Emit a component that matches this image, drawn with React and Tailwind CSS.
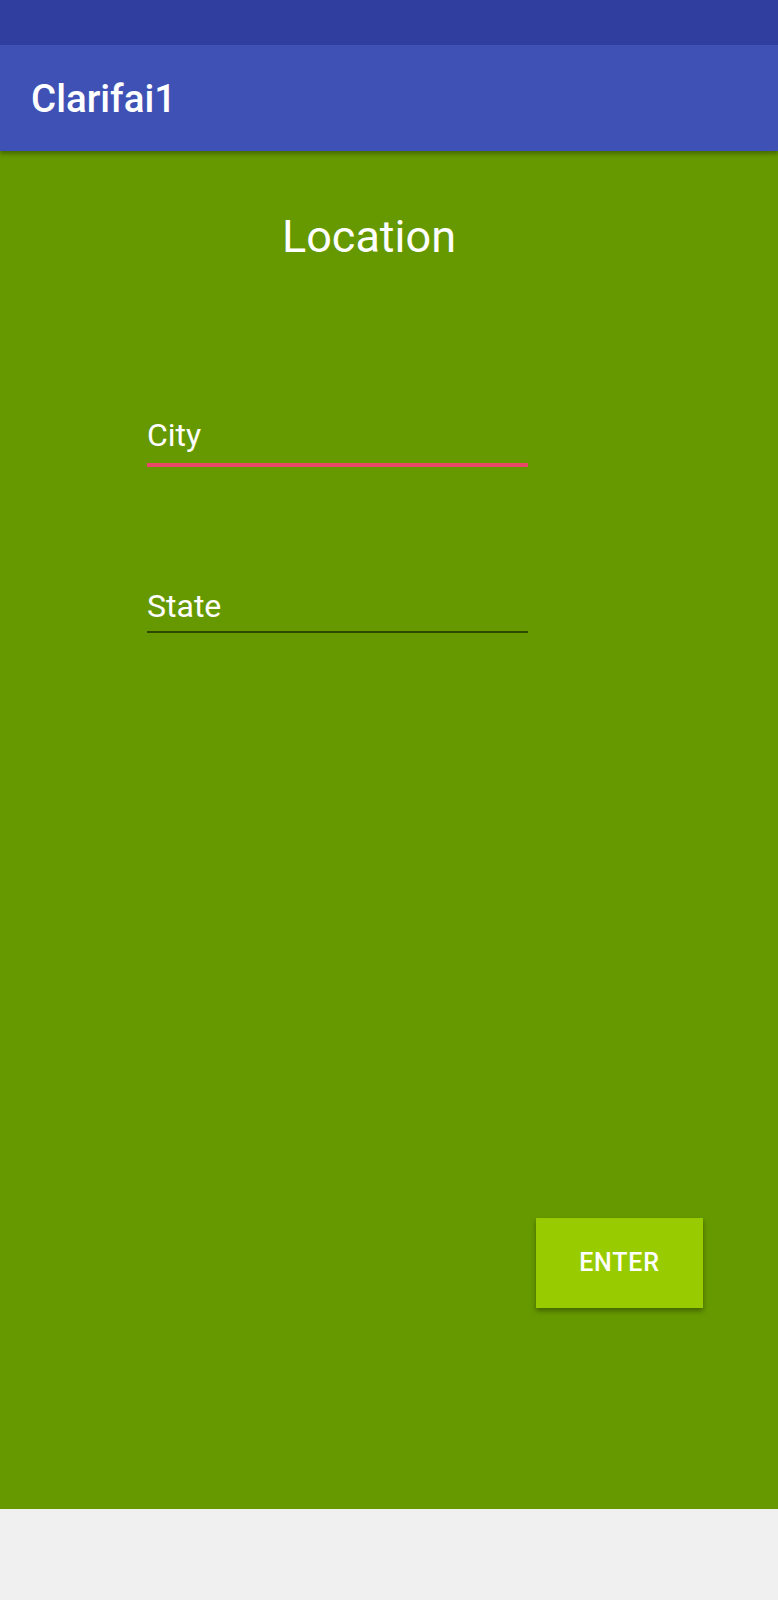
export default function App() {
  return (
    <div className="flex min-h-[1600px] w-[778px] flex-col bg-[#f0f0f0] font-['Roboto',sans-serif]">
      <div className="h-[45px] bg-[#303f9f]" />
      <div className="relative z-10 flex h-[106px] items-center bg-[#3f51b5] px-[31px] shadow-[0_3px_4px_rgba(0,0,0,0.3)]">
        <h1 className="pt-[2px] text-[38.5px] font-medium leading-none text-white">Clarifai1</h1>
      </div>

      <div className="flex h-[1358px] flex-col bg-[#669900]">
        <div className="flex justify-center pr-[40px] pt-[60px]">
          <h2 className="text-[45px] leading-[52px] text-white">Location</h2>
        </div>

        <div className="ml-[147px] mt-[153px] w-[381px]">
          <div className="border-b-4 border-[#e8476a] pb-[9px]">
            <input
              className="w-full bg-transparent text-[32px] leading-[38px] text-white outline-none placeholder:text-white"
              placeholder="City"
            />
          </div>
          <div className="mt-[120px] border-b-2 border-[#2f4a00] pb-[6px]">
            <input
              className="w-full bg-transparent text-[32px] leading-[38px] text-white outline-none placeholder:text-white"
              placeholder="State"
            />
          </div>
        </div>

        <div className="mr-[75px] mt-[585px] flex justify-end">
          <button className="h-[90px] w-[167px] bg-[#99cc00] text-[25px] font-medium tracking-[0.8px] text-white shadow-[0_3px_5px_rgba(0,0,0,0.35)]">
            ENTER
          </button>
        </div>
      </div>
    </div>
  );
}
